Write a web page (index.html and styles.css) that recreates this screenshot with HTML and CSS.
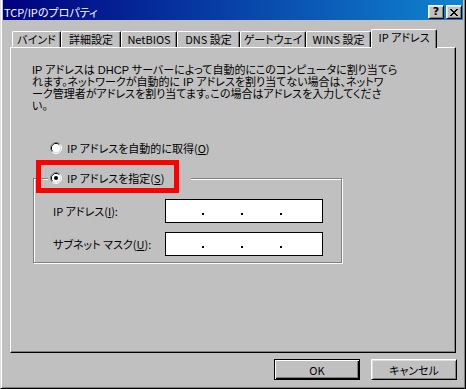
FILE: index.html
```html
<!DOCTYPE html>
<html lang="ja">
<head>
<meta charset="utf-8">
<title>TCP/IPのプロパティ</title>
<link rel="stylesheet" href="styles.css">
</head>
<body>
<div class="window">
  <div class="titlebar">
    <span class="title">TCP/IPのプロパティ</span>
    <div class="title-btns">
      <span class="tbtn help">?</span>
      <span class="tbtn close">
        <svg width="8" height="7" viewBox="0 0 8 7" shape-rendering="crispEdges">
          <path d="M0 0h2v1h-2zM6 0h2v1h-2zM1 1h2v1h-2zM5 1h2v1h-2zM2 2h4v1h-4zM3 3h2v1h-2zM2 4h4v1h-4zM1 5h2v1h-2zM5 5h2v1h-2zM0 6h2v1h-2zM6 6h2v1h-2z" fill="#000"/>
        </svg>
      </span>
    </div>
  </div>

  <div class="tabs">
    <div class="tab t1">バインド</div>
    <div class="tab t2">詳細設定</div>
    <div class="tab t3">NetBIOS</div>
    <div class="tab t4">DNS 設定</div>
    <div class="tab t5">ゲートウェイ</div>
    <div class="tab t6">WINS 設定</div>
    <div class="tab selected">IP アドレス</div>
  </div>

  <div class="panel">
    <p class="desc">IP アドレスは DHCP サーバーによって自動的にこのコンピュータに割り当てら<br>れます。ネットワークが自動的に IP アドレスを割り当てない場合は、ネットワ<br>ーク管理者がアドレスを割り当てます。この場合はアドレスを入力してくださ<br>い。</p>

    <div class="radio-row auto">
      <svg class="radio-ico" width="12" height="12" viewBox="0 0 12 12">
        <path d="M2.11 9.89A5.5 5.5 0 0 1 9.89 2.11" fill="none" stroke="#808080"/>
        <path d="M9.89 2.11A5.5 5.5 0 0 1 2.11 9.89" fill="none" stroke="#fff"/>
        <path d="M2.82 9.18A4.5 4.5 0 0 1 9.18 2.82" fill="none" stroke="#000"/>
        <path d="M9.18 2.82A4.5 4.5 0 0 1 2.82 9.18" fill="none" stroke="#dfdfdf"/>
        <circle cx="6" cy="6" r="4" fill="#fff"/>
      </svg>
      <span>IP アドレスを自動的に取得(<u>O</u>)</span>
    </div>

    <fieldset class="group">
      <legend class="radio-row legend">
        <svg class="radio-ico" width="12" height="12" viewBox="0 0 12 12">
          <path d="M2.11 9.89A5.5 5.5 0 0 1 9.89 2.11" fill="none" stroke="#808080"/>
          <path d="M9.89 2.11A5.5 5.5 0 0 1 2.11 9.89" fill="none" stroke="#fff"/>
          <path d="M2.82 9.18A4.5 4.5 0 0 1 9.18 2.82" fill="none" stroke="#000"/>
          <path d="M9.18 2.82A4.5 4.5 0 0 1 2.82 9.18" fill="none" stroke="#dfdfdf"/>
          <circle cx="6" cy="6" r="4" fill="#fff"/>
          <circle cx="6" cy="6" r="2" fill="#000"/>
        </svg>
        <span>IP アドレスを指定(<u>S</u>)</span>
      </legend>

      <div class="field-row first">
        <span class="field-label">IP アドレス(<u>I</u>):</span>
        <span class="ipbox"><i class="dot"></i><i class="dot"></i><i class="dot"></i></span>
      </div>
      <div class="field-row">
        <span class="field-label">サブネット マスク(<u>U</u>):</span>
        <span class="ipbox"><i class="dot"></i><i class="dot"></i><i class="dot"></i></span>
      </div>
    </fieldset>

    <div class="highlight"></div>
  </div>

  <div class="buttons">
    <button class="btn default">OK</button>
    <button class="btn">キャンセル</button>
  </div>
</div>
</body>
</html>
```
FILE: styles.css
```css
html, body {
  margin: 0;
  padding: 0;
  background: #c0c0c0;
}

body {
  font-family: "Noto Sans CJK JP", "Noto Sans", sans-serif;
  font-size: 11px;
  font-feature-settings: "palt";
  color: #000;
}

.window {
  width: 466px;
  height: 389px;
  box-sizing: border-box;
  background: #c0c0c0;
  border-left: 1px solid #dfdfdf;
  border-right: 1px solid #000;
  border-bottom: 1px solid #000;
  box-shadow: inset 1px 0 #fff, inset -1px -1px #808080;
  padding: 0 2px 2px 2px;
}

/* Title bar */
.titlebar {
  height: 20px;
  display: flex;
  justify-content: space-between;
  align-items: flex-start;
  background: linear-gradient(to right, #000080, #1084d0);
  color: #fff;
  margin-bottom: 9px;
}

.title {
  margin-top: 5px;
  padding-left: 1px;
  line-height: 14px;
  white-space: nowrap;
}

.title-btns {
  display: flex;
  gap: 2px;
  margin-top: 5px;
  margin-right: 1px;
}

.tbtn {
  width: 16px;
  height: 14px;
  box-sizing: border-box;
  background: #c0c0c0;
  border: 1px solid;
  border-color: #fff #000 #000 #fff;
  box-shadow: inset 1px 1px #dfdfdf, inset -1px -1px #808080;
  display: flex;
  align-items: center;
  justify-content: center;
  color: #000;
}

.tbtn.help {
  font-family: "DejaVu Sans", sans-serif;
  font-weight: bold;
  font-size: 11px;
  line-height: 12px;
}

.tbtn.close svg {
  display: block;
}

/* Tabs */
.tabs {
  display: flex;
  align-items: flex-start;
  height: 18px;
  margin-left: 9px;
}

.tab {
  height: 16px;
  margin-top: 2px;
  box-sizing: border-box;
  border-top: 1px solid #fff;
  border-left: 1px solid #fff;
  border-right: 1px solid #000;
  border-radius: 2px 2px 0 0;
  box-shadow: inset -1px 0 #808080;
  display: flex;
  align-items: center;
  justify-content: center;
  white-space: nowrap;
  line-height: 13px;
}

.t1 { width: 49px; }
.t2 { width: 60px; }
.t3 { width: 56px; }
.t4 { width: 63px; }
.t5 { width: 66px; }
.t6 { width: 65px; }

.tab.selected {
  width: 66px;
  height: 19px;
  margin-top: 0;
  padding-bottom: 3px;
  position: relative;
  z-index: 1;
  background: #c0c0c0;
}

/* Panel */
.panel {
  position: relative;
  width: 446px;
  height: 306px;
  margin-left: 7px;
  box-sizing: border-box;
  border: 1px solid;
  border-color: #fff #000 #000 #fff;
  box-shadow: inset -1px -1px #808080;
  padding: 16px 0 0 21px;
}

.desc {
  margin: 0;
  font-family: "Liberation Sans", "Noto Sans CJK JP", sans-serif;
  line-height: 12px;
  white-space: nowrap;
}

.radio-row {
  display: flex;
  align-items: center;
  gap: 5px;
  height: 12px;
  line-height: 12px;
  white-space: nowrap;
}

.radio-ico {
  display: block;
  flex: none;
}

.radio-row.auto {
  margin: 30px 0 0 18px;
}

.group {
  margin: 18px 0 0 1px;
  width: 309px;
  box-sizing: border-box;
  min-inline-size: 0;
  padding: 0 0 6px 0;
  border: 1px solid #808080;
  box-shadow: inset 1px 1px #fff, 1px 1px #fff;
}

.legend {
  width: 143px;
  box-sizing: border-box;
  margin-left: 14px;
  padding: 0 0 0 2px;
  background: #c0c0c0;
}

.field-row {
  display: grid;
  grid-template-columns: 112px 158px;
  align-items: center;
  padding-left: 19px;
  margin-top: 9px;
}

.field-row.first {
  margin-top: 15px;
}

.field-label {
  white-space: nowrap;
  line-height: 12px;
}

.ipbox {
  display: flex;
  align-items: flex-start;
  gap: 37px;
  height: 24px;
  box-sizing: border-box;
  border: 1px solid #000;
  background: #fff;
  padding-left: 36px;
}

.dot {
  display: block;
  width: 2px;
  height: 2px;
  margin-top: 13px;
  background: #000;
}

/* Red annotation box */
.highlight {
  position: absolute;
  left: 25px;
  top: 112px;
  width: 143px;
  height: 33px;
  box-sizing: border-box;
  border: 5px solid #ff0000;
}

/* Buttons */
.buttons {
  display: flex;
  justify-content: flex-end;
  gap: 11px;
  margin-top: 6px;
  padding-right: 6px;
}

.btn {
  width: 86px;
  height: 21px;
  box-sizing: border-box;
  margin: 0;
  padding: 0;
  font: inherit;
  line-height: 12px;
  color: #000;
  background: #c0c0c0;
  border: 1px solid;
  border-color: #fff #000 #000 #fff;
  box-shadow: inset 1px 1px #dfdfdf, inset -1px -1px #808080;
}

.btn.default {
  border-color: #000;
  box-shadow: inset 1px 1px #fff, inset -1px -1px #000, inset -2px -2px #808080;
}
```
